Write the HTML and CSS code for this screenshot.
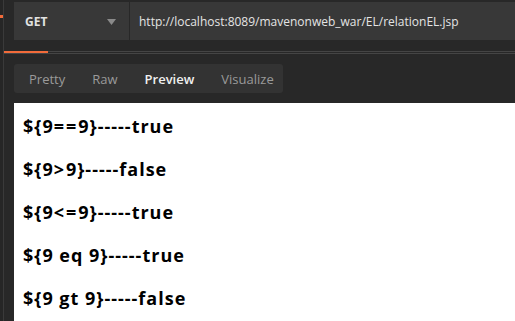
FILE: index.html
```html
<!DOCTYPE html>
<html lang="en">
<head>
    <meta charset="UTF-8">
    <meta name="viewport" content="width=device-width, initial-scale=1.0">
    <title>relationEL.jsp - Preview</title>
    <link rel="stylesheet" href="styles.css">
</head>
<body>
    <div class="app">
        <div class="rail">
            <div class="rail-mark"></div>
        </div>

        <div class="main">
            <div class="request-bar">
                <div class="method">
                    <span>GET</span>
                    <svg class="caret" width="9" height="6" viewBox="0 0 9 6"><path d="M0 0h9L4.5 6z" fill="#8a8a8a"/></svg>
                </div>
                <div class="url">http://localhost:8089/mavenonweb_war/EL/relationEL.jsp</div>
            </div>

            <div class="tabline">
                <div class="tabline-active"></div>
            </div>

            <div class="response-tabs">
                <span class="tab">Pretty</span>
                <span class="tab">Raw</span>
                <span class="tab active">Preview</span>
                <span class="tab">Visualize</span>
            </div>

            <div class="preview">
                <p>${9<span class="op">==</span>9}-----true</p>
                <p>${9<span class="op">&gt;</span>9}-----false</p>
                <p>${9<span class="op">&lt;=</span>9}-----true</p>
                <p>${9 eq 9}-----true</p>
                <p>${9 gt 9}-----false</p>
            </div>
        </div>
    </div>
</body>
</html>
```

FILE: styles.css
```css
* {
    margin: 0;
    padding: 0;
    box-sizing: border-box;
}

html, body {
    height: 100%;
}

body {
    font-family: 'Open Sans', 'Noto Sans', sans-serif;
    background: #282828;
    color: #e0e0e0;
    overflow: hidden;
}

.app {
    display: flex;
    height: 100%;
}

.rail {
    width: 4px;
    flex-shrink: 0;
    background: #262626;
    border-right: 1px solid #3a3a3a;
}

.rail-mark {
    margin-top: 15px;
    width: 3px;
    height: 3px;
    background: #f26b3a;
}

.main {
    flex: 1;
    display: flex;
    flex-direction: column;
    min-width: 0;
}

.request-bar {
    display: flex;
    height: 38px;
    margin: 2px 0 0 10px;
    gap: 1px;
}

.method {
    width: 115px;
    background: #383838;
    display: flex;
    align-items: center;
    justify-content: space-between;
    padding: 0 13px 0 11px;
    font-size: 12px;
    font-weight: bold;
    color: #e2e2e2;
}

.caret {
    margin-top: 1px;
}

.url {
    flex: 1;
    background: #383838;
    display: flex;
    align-items: center;
    padding-left: 9px;
    font-size: 12px;
    color: #e4e4e4;
    white-space: nowrap;
    overflow: hidden;
}

.tabline {
    height: 3px;
    margin-top: 11px;
    border-top: 1px solid #454545;
    border-bottom: 1px solid #454545;
}

.tabline-active {
    width: 44px;
    height: 2px;
    margin-top: -1px;
    background: #f26b3a;
}

.response-tabs {
    display: flex;
    align-items: center;
    width: 269px;
    height: 29px;
    margin: 10px 0 0 10px;
    padding-left: 15px;
    gap: 27px;
    background: #333333;
    border-radius: 3px;
    font-size: 13px;
}

.tab {
    color: #9a9a9a;
}

.tab.active {
    color: #f0f0f0;
    font-weight: 600;
}

.preview {
    flex: 1;
    margin: 10px 0 0 10px;
    padding: 2px 0 0 9px;
    background: #ffffff;
    color: #000000;
    font-size: 18px;
    font-weight: bold;
    letter-spacing: 1px;
}

.preview p {
    line-height: 43px;
}

.op {
    letter-spacing: 2px;
}
```
